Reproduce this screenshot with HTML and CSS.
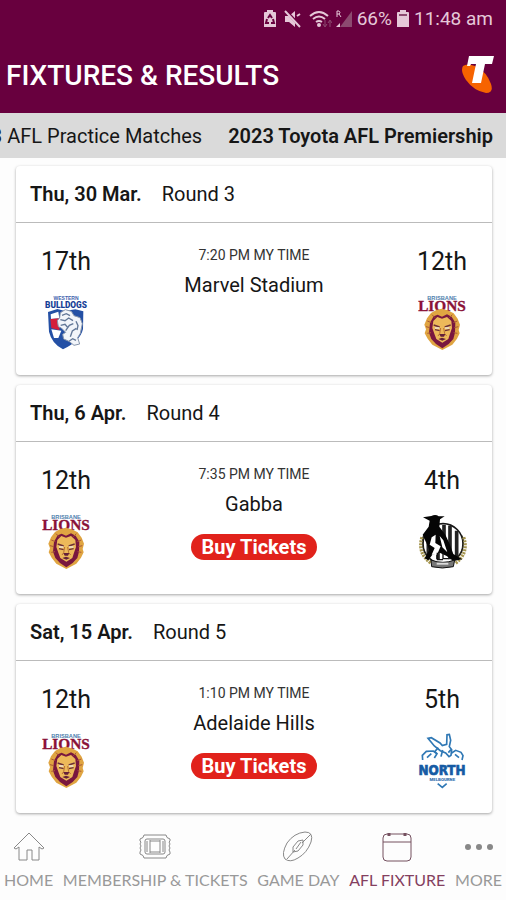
FILE: index.html
```html
<!DOCTYPE html>
<html lang="en">

<head>
    <meta charset="UTF-8">
    <meta name="viewport" content="width=device-width, initial-scale=1.0">
    <title>Fixtures &amp; Results</title>
    <link rel="stylesheet" href="styles.css">
</head>

<body>

    <!-- Team logos -->
    <svg class="sprites" aria-hidden="true">
        <symbol id="lions" viewBox="48 30 150 174">
            <text x="123" y="47" class="logo-sans" font-size="17" fill="#4f7fae" text-anchor="middle">BRISBANE</text>
            <text x="123" y="82" class="logo-serif" font-size="46" fill="#8a1238" stroke="#8a1238" stroke-width="1" text-anchor="middle">LIONS</text>
            <path d="M122 74 L140 79 L158 88 L170 104 L177 122 L173 138 L176 148 L168 164 L154 182 L124 198 L94 182 L80 164 L71 148 L75 136 L70 122 L78 103 L90 87 L106 78 Z" fill="#e0a542"/>
            <path d="M98 97 L110 92 L123 98 L138 91 L152 98 L163 116 L162 146 L157 165 L143 180 L124 193 L105 180 L91 165 L84 146 L87 116 Z" fill="#79173f"/>
            <path d="M109 99 L123 104 L138 99 L151 111 L153 132 L147 149 L142 165 L124 176 L106 165 L100 149 L94 132 L97 111 Z" fill="#edb95a"/>
            <path d="M98 123 L116 129 M149 123 L131 129 M102 137 L116 140 M146 137 L132 140" stroke="#6c3138" stroke-width="4"/>
            <path d="M102 132h13M132 132h13" stroke="#eee5d5" stroke-width="5"/>
            <path d="M119 132 L116 149 L111 156 M128 132 L131 149 L137 156" fill="none" stroke="#b77035" stroke-width="3"/>
            <path d="M115 150h18l-4 8h-10ZM112 165l11-4 12 4-11 5Z" fill="#642039"/>
            <path d="M79 111l12 5M75 128l12 3M79 148l11-2M169 111l-12 5M172 128l-12 3M169 148l-11-2M93 92l9 9M154 92l-9 9" stroke="#a95736" stroke-width="3"/>
        </symbol>
        <symbol id="bulldogs" viewBox="33 30 150 174">
            <text x="108" y="49" class="logo-sans" font-size="15" fill="#3e63ad" text-anchor="middle">WESTERN</text>
            <text x="108" y="71" class="logo-black" font-size="25" fill="#153e96" text-anchor="middle">BULLDOGS</text>
            <path d="M54 84 L82 75 L105 81 L136 76 L160 82 L159 135 Q151 171 99 196 Q65 178 57 143 Z" fill="#2450a5"/>
            <path d="M62 91 L85 83 L88 103 L63 105 Z" fill="#fff"/>
            <path d="M61 105 L90 103 L88 139 L64 132 Z" fill="#d4203b"/>
            <path d="M64 136 L94 140 L85 162 L72 162 Z" fill="#fff"/>
            <path d="M91 86 L106 77 L124 82 L132 95 L150 101 L157 119 L151 148 L143 161 L149 180 L132 184 L117 172 L101 165 L98 151 L107 145 L94 132 L85 128 L82 110 L89 101 Z" fill="#f2f5fa" stroke="#8896ac" stroke-width="3"/>
            <path d="M96 94l13-5 11 6M91 107l14 3 11-8 13 8M92 124l13-3 7 8M107 140l11-16 12-5M121 158l6-17 12-8M118 171l10-7 10 5M138 112l6 13-3 13" fill="none" stroke="#627797" stroke-width="4"/>
            <path d="M88 176l14-6 20 11-23 12Z" fill="#2450a5"/>
        </symbol>
        <symbol id="magpies" viewBox="48 26 150 174">
            <circle cx="126" cy="118" r="60" fill="#fff" stroke="#171717" stroke-width="5"/>
            <path d="M111 72V164M129 62V120M147 64V165M167 79V158M82 115V151" stroke="#222" stroke-width="11"/>
            <path d="M63 99 Q48 147 91 177 M188 99 Q204 147 163 177" fill="none" stroke="#a69650" stroke-width="10" stroke-dasharray="6 3"/>
            <path d="M67 94 Q56 142 96 173 M184 94 Q196 142 155 173" fill="none" stroke="#38351f" stroke-width="3" stroke-dasharray="7 3"/>
            <path d="M66 39 L91 35 Q104 29 113 36 L131 36 L117 45 L115 67 L133 91 L146 119 L157 149 L184 165 L157 170 L137 155 L116 145 L94 151 L82 168 L71 162 L85 137 L76 116 L65 91 L83 67 L86 49 Z" fill="#050505"/>
            <path d="M92 99 L104 91 L103 116 L119 126 L108 151 L92 151 L101 131 L86 121 Z M116 95 L127 108 L139 144 L124 129 Z" fill="#fff"/>
            <path d="M109 145v21h17M126 144v19h17" fill="none" stroke="#111" stroke-width="4"/>
            <path d="M90 167 Q126 181 161 167 L157 187 Q124 195 92 187 Z" fill="#777" stroke="#111" stroke-width="3"/>
            <path d="M107 178h35" stroke="#ddd" stroke-width="6"/>
        </symbol>
        <symbol id="north" viewBox="48 21 150 174">
            <g fill="none" stroke="#2f78b5" stroke-width="5">
                <path d="M81 40 L91 38 L117 54 L124 62 L137 58 L138 29 L145 28 L149 46 L145 65 L152 74 L150 91 L144 95 L134 84 L118 77 L100 63 Z"/>
                <path d="M112 68 L101 80 L108 86 L100 99 M150 74 L142 83 M125 75 L120 95"/>
                <path d="M65 105 L64 91 L76 79 L97 78 L106 85 M152 84 L164 76 L180 82 L186 92 L183 105 M78 98 L91 86 M174 98 L162 88"/>
                <path d="M110 176 L124 187 L137 176"/>
            </g>
            <text x="123" y="149" class="logo-north" font-size="40" fill="#155ba4" stroke="#155ba4" stroke-width="2" text-anchor="middle">NORTH</text>
            <text x="124" y="167" class="logo-black" font-size="13" fill="#3470ad" text-anchor="middle">MELBOURNE</text>
        </symbol>
    </svg>

    <header class="header">
        <div class="status">
            <svg width="14" height="18" viewBox="0 0 14 18"><path d="M4 0h6v2h2q1 0 1 1v14H1V3q0-1 1-1h2Z" fill="#e5c8d8"/><path d="M5 8l2-3 2 3M10 9l1 4H8M6 13H3l1-4" fill="none" stroke="#68003e" stroke-width="2"/></svg>
            <svg class="mute" width="18" height="18" viewBox="0 0 18 18"><path d="M1 6h4l6-5v16l-6-5H1Z" fill="#e5c8d8"/><path d="M2 1l15 16" stroke="#68003e" stroke-width="3"/><path d="M1 1l15 16M13 6l3-2" stroke="#e5c8d8" stroke-width="2"/></svg>
            <svg class="wifi" width="23" height="18" viewBox="0 0 23 18"><path d="M1 6Q10-2 19 6M4 9q6-5 12 0M7 12q3-2 6 0" fill="none" stroke="#e5c8d8" stroke-width="2"/><circle cx="10" cy="15" r="2" fill="#e5c8d8"/><path d="M16 10v6m-2-2 2 3 2-3M21 17v-6m-2 2 2-3 2 3" fill="none" stroke="#8c4a70"/></svg>
            <svg width="18" height="18" viewBox="0 0 18 18"><path d="M17 1v16H5Z" fill="#8c4a70"/><path d="M5 13v4H1Z" fill="#e5c8d8"/><path d="M2 7V1h2q2 2 0 3H2m2 0 2 3" fill="none" stroke="#e5c8d8" stroke-width="1"/></svg>
            <span class="percent">66%</span>
            <svg width="14" height="18" viewBox="0 0 14 18"><path d="M4 0h6v2h2q1 0 1 1v14H1V3q0-1 1-1h2Z" fill="#e5c8d8"/><path d="M3 5h8" stroke="#8c4a70" stroke-width="2"/></svg>
            <span class="time">11:48 am</span>
        </div>
        <div class="title-row">
            <h1>FIXTURES &amp; RESULTS</h1>
            <svg class="telstra" width="34" height="38" viewBox="0 0 34 38" role="img" aria-label="Telstra">
                <path d="M2 10Q6 7 14 10Q26 16 30 28Q33 37 25 37Q13 35 5 24Q-1 15 2 10Z" fill="#f66300"/>
                <path d="M8 0H33L31 8H24L20 27H11L15 8H10L9 10H6Z" fill="#fff"/>
            </svg>
        </div>
    </header>

    <nav class="tabs">
        <a href="#">2023 AFL Practice Matches</a>
        <a href="#" class="active">2023 Toyota AFL Premiership</a>
    </nav>

    <main class="fixtures">
        <article class="card">
            <div class="card-head">
                <h2>Thu, 30 Mar.</h2>
                <span>Round 3</span>
            </div>
            <div class="card-body">
                <div class="team">
                    <span class="rank">17th</span>
                    <svg class="logo"><use href="#bulldogs"/></svg>
                </div>
                <div class="match">
                    <span class="match-time">7:20 PM MY TIME</span>
                    <span class="venue">Marvel Stadium</span>
                </div>
                <div class="team">
                    <span class="rank">12th</span>
                    <svg class="logo"><use href="#lions"/></svg>
                </div>
            </div>
        </article>

        <article class="card">
            <div class="card-head">
                <h2>Thu, 6 Apr.</h2>
                <span>Round 4</span>
            </div>
            <div class="card-body">
                <div class="team">
                    <span class="rank">12th</span>
                    <svg class="logo"><use href="#lions"/></svg>
                </div>
                <div class="match">
                    <span class="match-time">7:35 PM MY TIME</span>
                    <span class="venue">Gabba</span>
                    <button type="button" class="buy">Buy Tickets</button>
                </div>
                <div class="team">
                    <span class="rank">4th</span>
                    <svg class="logo"><use href="#magpies"/></svg>
                </div>
            </div>
        </article>

        <article class="card">
            <div class="card-head">
                <h2>Sat, 15 Apr.</h2>
                <span>Round 5</span>
            </div>
            <div class="card-body">
                <div class="team">
                    <span class="rank">12th</span>
                    <svg class="logo"><use href="#lions"/></svg>
                </div>
                <div class="match">
                    <span class="match-time">1:10 PM MY TIME</span>
                    <span class="venue">Adelaide Hills</span>
                    <button type="button" class="buy">Buy Tickets</button>
                </div>
                <div class="team">
                    <span class="rank">5th</span>
                    <svg class="logo"><use href="#north"/></svg>
                </div>
            </div>
        </article>
    </main>

    <!-- Bottom menu -->
    <nav class="menu">
        <a href="#">
            <svg width="34" height="32" viewBox="0 0 34 32"><path d="M2 17 17 2l15 15-2 1-3-2v13h-7V19h-5v10H7V16l-3 2Z"/></svg>
            HOME
        </a>
        <a href="#">
            <svg width="34" height="32" viewBox="0 0 34 32"><path d="M6 4h22q0 3 4 4v2l-1 1 1 2-1 2 1 2-1 2 1 2v2q-4 1-4 4H6q0-3-4-4v-2l1-2-1-2 1-2-1-2 1-2-1-1V8q4-1 4-4Z"/><path d="M9 8h16q2 0 2 2v11q0 2-2 2H9q-2 0-2-2V10q0-2 2-2ZM9 10v11M12 9v13M22 9v13M25 10v11M12 10h10M12 21h10"/></svg>
            MEMBERSHIP &amp; TICKETS
        </a>
        <a href="#">
            <svg width="34" height="32" viewBox="0 0 34 32"><path d="M4 28Q0 23 6 12Q13 2 24 1Q33 1 30 11Q26 22 17 27Q9 32 4 28Z"/><path d="M6 28 14 19M21 12 30 3M12 21v-5l5-6 5-1v5l-5 6ZM15 18l5-7"/></svg>
            GAME DAY
        </a>
        <a href="#" class="active">
            <svg width="34" height="32" viewBox="0 0 34 32"><rect x="3" y="3" width="28" height="27" rx="4"/><path d="M3 11h28"/><path d="M9 2v3M25 2v3" stroke-width="3"/></svg>
            AFL FIXTURE
        </a>
        <a href="#">
            <svg width="34" height="32" viewBox="0 0 34 32"><g fill="#888" stroke="none"><circle cx="6" cy="16" r="3"/><circle cx="17" cy="16" r="3"/><circle cx="28" cy="16" r="3"/></g></svg>
            MORE
        </a>
    </nav>

</body>

</html>
```
FILE: styles.css
```css
* {
    box-sizing: border-box;
}

body {
    margin: 0;
    background-color: #fdfdfd;
    color: #161616;
    font-family: Roboto, sans-serif;
}

a {
    color: inherit;
    text-decoration: none;
}

.sprites {
    display: none;
}

/* Header */
.header {
    background-color: #68003e;
    color: white;
}

.status {
    display: flex;
    align-items: center;
    justify-content: flex-end;
    height: 37px;
    padding-right: 13px;
    color: #e5c8d8;
    font-size: 19px;
}

.mute {
    margin: 0 7px;
}

.wifi {
    margin-right: 3px;
}

.percent {
    margin: 0 4px;
}

.time {
    margin-left: 4px;
}

.title-row {
    display: flex;
    align-items: center;
    justify-content: space-between;
    height: 76px;
    padding: 0 11px 0 6px;
}

h1 {
    margin: 0;
    font-size: 28px;
    font-weight: 500;
}

/* Competition tabs */
.tabs {
    display: flex;
    align-items: center;
    justify-content: flex-end;
    gap: 26px;
    height: 45px;
    padding-right: 13px;
    overflow: hidden;
    background-color: #dadada;
    font-size: 20px;
    white-space: nowrap;
}

.tabs .active {
    font-weight: 600;
}

/* Match cards */
.fixtures {
    display: grid;
    gap: 10px;
    padding: 8px 14px 0 16px;
}

.card {
    background-color: white;
    border-radius: 4px;
    box-shadow: 0 1px 3px rgba(0, 0, 0, 0.35);
}

.card-head {
    display: flex;
    align-items: center;
    gap: 20px;
    height: 57px;
    padding: 0 14px;
    border-bottom: 1px solid #bbb;
    font-size: 20px;
}

h2 {
    margin: 0;
    font-size: 20px;
    font-weight: 600;
}

.card-body {
    display: grid;
    grid-template-columns: 100px 1fr 100px;
    height: 152px;
    padding-top: 23px;
}

.team,
.match {
    display: flex;
    flex-direction: column;
    align-items: center;
}

.rank {
    font-size: 25px;
    line-height: 32px;
}

.logo {
    width: 50px;
    height: 58px;
    margin-top: 16px;
}

.match-time {
    font-size: 14px;
    line-height: 18px;
    color: #333;
}

.venue {
    margin-top: 7px;
    font-size: 20px;
    line-height: 28px;
}

.buy {
    width: 126px;
    height: 26px;
    margin-top: 16px;
    padding: 0;
    border: none;
    border-radius: 13px;
    background-color: #e1221b;
    color: white;
    font-family: inherit;
    font-size: 20px;
    font-weight: bold;
    line-height: 26px;
    cursor: pointer;
}

/* Bottom menu */
.menu {
    display: flex;
    justify-content: space-between;
    padding: 18px 4px 8px;
    color: #999;
    font-family: Lato, sans-serif;
    font-size: 16px;
    line-height: 22px;
    white-space: nowrap;
}

.menu a {
    display: flex;
    flex-direction: column;
    align-items: center;
    gap: 6px;
}

.menu svg {
    fill: none;
    stroke: #888;
    stroke-width: 1;
}

.menu .active {
    color: #84405f;
}

.menu .active svg {
    stroke: #74505f;
}

/* Lettering in the team logos */
.logo-sans {
    font-family: "Liberation Sans", sans-serif;
    font-weight: bold;
}

.logo-serif {
    font-family: "Liberation Serif", serif;
    font-weight: bold;
}

.logo-black {
    font-family: Roboto, sans-serif;
    font-weight: 900;
}

.logo-north {
    font-family: "DejaVu Sans Condensed", "Liberation Sans", sans-serif;
    font-weight: bold;
}
```
